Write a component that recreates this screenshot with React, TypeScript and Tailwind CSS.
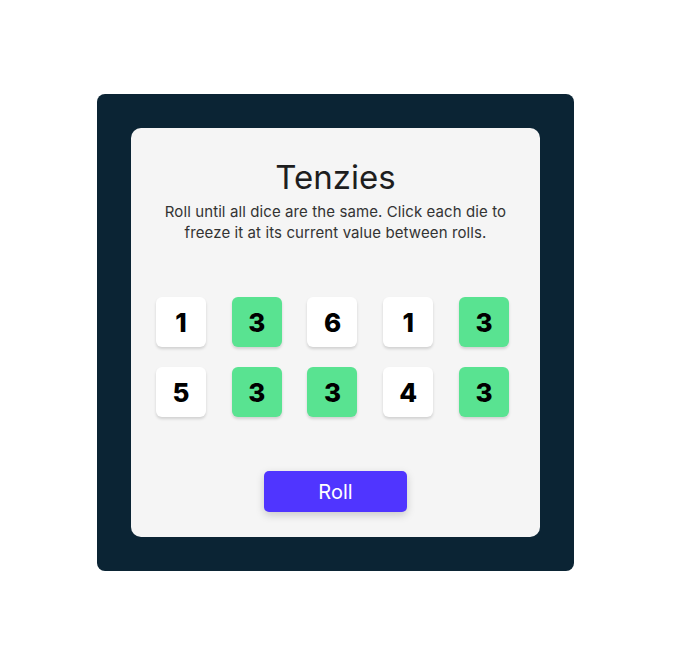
const DICE = [
  { value: 1, held: false },
  { value: 3, held: true },
  { value: 6, held: false },
  { value: 1, held: false },
  { value: 3, held: true },
  { value: 5, held: false },
  { value: 3, held: true },
  { value: 3, held: true },
  { value: 4, held: false },
  { value: 3, held: true },
];

function Die({ value, held }: { value: number; held: boolean }) {
  return (
    <button
      className={`flex h-[50px] w-[50px] items-center justify-center rounded-[6px] text-[26px] font-extrabold text-black shadow-[0_2px_3px_rgba(0,0,0,0.15)] ${
        held ? "bg-[#59E391]" : "bg-white"
      }`}
    >
      {value}
    </button>
  );
}

export default function App() {
  return (
    <div className="min-h-[665px] bg-white pl-[97px] pt-[94px] font-['Inter',sans-serif]">
      <main className="flex h-[477px] w-[477px] items-center justify-center rounded-[8px] bg-[#0B2434]">
        <div className="flex h-[409px] w-[409px] flex-col items-center rounded-[10px] bg-[#F5F5F5] pt-[28px]">
          <h1 className="text-[33px] leading-[42px] font-normal text-[#1E1E1E]">Tenzies</h1>
          <p className="mt-[3px] max-w-[350px] text-center text-[15px] leading-[21px] tracking-[0.1px] text-[#333333]">
            Roll until all dice are the same. Click each die to freeze it at its current value between rolls.
          </p>

          {/* dice grid */}
          <div className="mt-[54px] ml-[12px] grid w-[379px] grid-cols-5 justify-items-center gap-y-[20px] self-start">
            {DICE.map((d, i) => (
              <Die key={i} value={d.value} held={d.held} />
            ))}
          </div>

          <button className="mt-[54px] h-[41px] w-[143px] rounded-[5px] bg-[#5035FF] text-[20px] text-white shadow-[0_3px_8px_rgba(0,0,0,0.18)]">
            Roll
          </button>
        </div>
      </main>
    </div>
  );
}
